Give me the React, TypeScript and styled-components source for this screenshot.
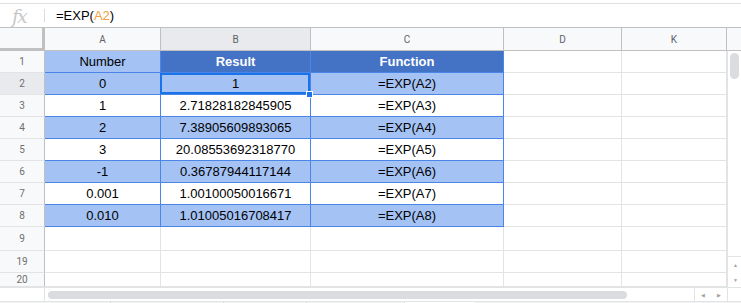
import styled, { createGlobalStyle } from "styled-components";

const GlobalStyle = createGlobalStyle`
  html, body {
    margin: 0;
    padding: 0;
    background: #ffffff;
    overflow: hidden;
  }
  body {
    font-family: "Liberation Sans", Arial, sans-serif;
  }
`;

const COLS = [116, 150, 193, 118, 105];
const LETTERS = ["A", "B", "C", "D", "K"];

type Row = { num: string; height: number; cells: string[]; kind: "head" | "band" | "plain" | "empty" };

const ROWS: Row[] = [
  { num: "1", height: 22, kind: "head", cells: ["Number", "Result", "Function"] },
  { num: "2", height: 22, kind: "band", cells: ["0", "1", "=EXP(A2)"] },
  { num: "3", height: 22, kind: "plain", cells: ["1", "2.71828182845905", "=EXP(A3)"] },
  { num: "4", height: 22, kind: "band", cells: ["2", "7.38905609893065", "=EXP(A4)"] },
  { num: "5", height: 22, kind: "plain", cells: ["3", "20.08553692318770", "=EXP(A5)"] },
  { num: "6", height: 22, kind: "band", cells: ["-1", "0.36787944117144", "=EXP(A6)"] },
  { num: "7", height: 22, kind: "plain", cells: ["0.001", "1.00100050016671", "=EXP(A7)"] },
  { num: "8", height: 22, kind: "band", cells: ["0.010", "1.01005016708417", "=EXP(A8)"] },
  { num: "9", height: 24, kind: "empty", cells: [] },
  { num: "19", height: 22, kind: "empty", cells: [] },
  { num: "20", height: 14, kind: "empty", cells: [] },
];

function fillFor(row: Row, col: number) {
  if (row.kind === "empty" || col > 2) return "#ffffff";
  if (row.kind === "head") return col === 0 ? "#a4c2f4" : "#4472c4";
  return row.kind === "band" ? "#a4c2f4" : "#ffffff";
}

function App() {
  return (
    <>
      <GlobalStyle />
      <Page>
        <FormulaBar>
          <FxLabel>fx</FxLabel>
          <FxDivider />
          <FormulaText>
            =EXP(<Ref>A2</Ref>)
          </FormulaText>
        </FormulaBar>

        <SheetArea>
          <Grid>
            <Corner />
            {LETTERS.map((l, i) => (
              <ColHeader key={l} $width={COLS[i]} $selected={i === 1}>
                {l}
              </ColHeader>
            ))}

            {ROWS.map((row) => (
              <RowLine key={row.num} $height={row.height}>
                <RowHeader $selected={row.num === "2"}>{row.num}</RowHeader>
                {COLS.map((w, c) => {
                  const inTable = row.kind !== "empty" && c < 3;
                  return (
                    <Cell
                      key={c}
                      $width={w}
                      $fill={fillFor(row, c)}
                      $blue={inTable}
                      $strong={row.kind === "head" && c > 0}
                    >
                      {row.cells[c] ?? ""}
                      {row.num === "2" && c === 1 && (
                        <>
                          <Selection />
                          <Handle />
                        </>
                      )}
                    </Cell>
                  );
                })}
              </RowLine>
            ))}
          </Grid>

          <VScroll>
            <VScrollHead />
            <VTrack>
              <VThumb />
              <VArrows>
                <Arrow>▲</Arrow>
                <Arrow>▼</Arrow>
              </VArrows>
            </VTrack>
          </VScroll>
        </SheetArea>

        <HScroll>
          <HScrollLead />
          <HTrack>
            <HThumb />
          </HTrack>
          <HArrows>
            <Arrow>◀</Arrow>
            <Arrow>▶</Arrow>
          </HArrows>
          <HCorner />
        </HScroll>

        <TabStrip>
          <TabStub $width={110} />
          <TabStub $width={80} />
          <TabStub $width={95} />
          <TabStub $width={70} $active />
        </TabStrip>
      </Page>
    </>
  );
}

const Page = styled.div`
  width: 741px;
  height: 303px;
  overflow: hidden;
  background: #ffffff;
`;

const FormulaBar = styled.div`
  margin-top: 3px;
  height: 23px;
  border-top: 1px solid #e0e0e0;
  display: flex;
  align-items: center;
  background: #ffffff;
`;

const FxLabel = styled.div`
  width: 44px;
  padding-left: 12px;
  box-sizing: border-box;
  font-family: "DejaVu Serif", "Liberation Serif", serif;
  font-style: italic;
  font-size: 19px;
  line-height: 20px;
  color: #c8c8c8;
  letter-spacing: -2px;
`;

const FxDivider = styled.div`
  width: 1px;
  height: 13px;
  background: #dadce0;
`;

const FormulaText = styled.div`
  padding-left: 11px;
  font-size: 13px;
  color: #000000;
`;

const Ref = styled.span`
  color: #f29e3d;
`;

const SheetArea = styled.div`
  display: flex;
  border-top: 1px solid #c0c0c0;
`;

const Grid = styled.div`
  width: 727px;
  display: flex;
  flex-wrap: wrap;
  align-content: flex-start;
`;

const Corner = styled.div`
  width: 45px;
  height: 23px;
  box-sizing: border-box;
  background: #f8f9fa;
  border-right: 3px solid #c0c0c0;
  border-bottom: 3px solid #c0c0c0;
`;

const ColHeader = styled.div<{ $width: number; $selected?: boolean }>`
  width: ${(p) => p.$width}px;
  height: 23px;
  box-sizing: border-box;
  background: ${(p) => (p.$selected ? "#e8eaed" : "#f8f9fa")};
  border-right: 1px solid #c0c0c0;
  border-bottom: 1px solid #c0c0c0;
  display: flex;
  align-items: center;
  justify-content: center;
  font-family: Roboto, "Liberation Sans", sans-serif;
  font-size: 10px;
  color: #5f6368;
`;

const RowLine = styled.div<{ $height: number }>`
  width: 727px;
  height: ${(p) => p.$height}px;
  display: flex;
`;

const RowHeader = styled.div<{ $selected?: boolean }>`
  width: 45px;
  flex-shrink: 0;
  box-sizing: border-box;
  background: ${(p) => (p.$selected ? "#e8eaed" : "#f8f9fa")};
  border-right: 1px solid #c0c0c0;
  border-bottom: 1px solid #e2e3e3;
  display: flex;
  align-items: center;
  justify-content: center;
  font-family: Roboto, "Liberation Sans", sans-serif;
  font-size: 10px;
  color: #6f6f6f;
`;

const Cell = styled.div<{
  $width: number;
  $fill: string;
  $blue: boolean;
  $strong: boolean;
}>`
  position: relative;
  width: ${(p) => p.$width}px;
  flex-shrink: 0;
  box-sizing: border-box;
  background: ${(p) => p.$fill};
  border-right: 1px solid ${(p) => (p.$blue ? "#4a86e8" : "#e2e3e3")};
  border-bottom: 1px solid ${(p) => (p.$blue ? "#4a86e8" : "#e2e3e3")};
  display: flex;
  align-items: center;
  justify-content: center;
  font-size: 13px;
  font-weight: ${(p) => (p.$strong ? 700 : 400)};
  color: ${(p) => (p.$strong ? "#ffffff" : "#000000")};
  white-space: nowrap;
`;

const Selection = styled.div`
  position: absolute;
  z-index: 2;
  left: -1px;
  top: 0;
  right: 0;
  bottom: 0;
  border: 2px solid #1a73e8;
  pointer-events: none;
`;

const Handle = styled.div`
  position: absolute;
  z-index: 3;
  right: -3px;
  bottom: -4px;
  width: 7px;
  height: 7px;
  box-sizing: border-box;
  background: #1a73e8;
  border: 1px solid #ffffff;
`;

const VScroll = styled.div`
  width: 14px;
  display: flex;
  flex-direction: column;
  background: #ffffff;
`;

const VScrollHead = styled.div`
  height: 23px;
  box-sizing: border-box;
  background: #f8f9fa;
  border-bottom: 1px solid #c0c0c0;
`;

const VTrack = styled.div`
  height: 236px;
  box-sizing: border-box;
  border-left: 1px solid #e2e3e3;
  display: flex;
  flex-direction: column;
  align-items: center;
`;

const VThumb = styled.div`
  margin-top: 2px;
  width: 9px;
  height: 26px;
  border-radius: 5px;
  background: #dadce0;
`;

const VArrows = styled.div`
  margin-top: auto;
  width: 13px;
  display: flex;
  flex-direction: column;
  border-top: 1px solid #e2e3e3;
`;

const Arrow = styled.div`
  height: 15px;
  width: 15px;
  display: flex;
  align-items: center;
  justify-content: center;
  font-size: 5px;
  color: #a0a0a0;
`;

const HScroll = styled.div`
  height: 13px;
  display: flex;
  border-top: 1px solid #e2e3e3;
`;

const HScrollLead = styled.div`
  width: 45px;
  box-sizing: border-box;
  border-right: 1px solid #e2e3e3;
`;

const HTrack = styled.div`
  width: 649px;
  display: flex;
  align-items: center;
  padding-left: 3px;
  box-sizing: border-box;
`;

const HThumb = styled.div`
  width: 579px;
  height: 8px;
  border-radius: 4px;
  background: #dadce0;
`;

const HArrows = styled.div`
  width: 32px;
  display: flex;
  border-left: 1px solid #e2e3e3;
  border-right: 1px solid #e2e3e3;
  & > div {
    width: 16px;
    height: 13px;
  }
`;

const HCorner = styled.div`
  flex: 1;
`;

const TabStrip = styled.div`
  height: 3px;
  display: flex;
  gap: 2px;
  background: #f1f3f4;
  border-top: 1px solid #e2e3e3;
  padding-left: 110px;
`;

const TabStub = styled.div<{ $width: number; $active?: boolean }>`
  width: ${(p) => p.$width}px;
  background: ${(p) => (p.$active ? "#ffffff" : "#f1f3f4")};
  border-left: 1px solid #dadce0;
`;

export default App;
